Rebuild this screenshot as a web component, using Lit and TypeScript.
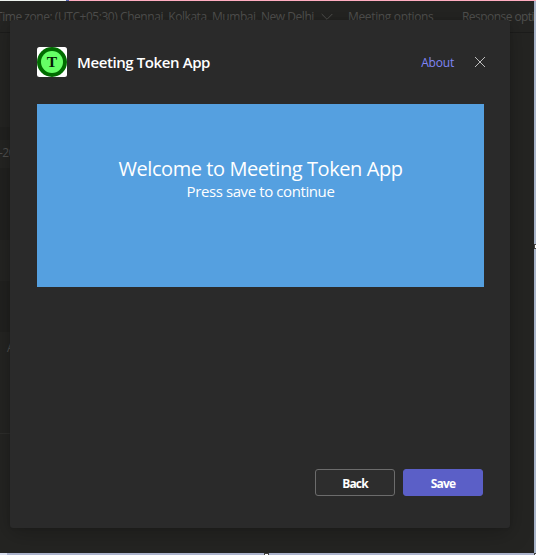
import { LitElement, html, css } from "lit";
import { customElement } from "lit/decorators.js";

@customElement("app-badge")
class AppBadge extends LitElement {
  static styles = css`
    :host { display: block; width: 30px; height: 30px; }
    svg { display: block; }
    text { font: bold 15.5px "Liberation Serif", serif; fill: #041a04; }
  `;
  render() {
    return html`<svg width="30" height="30" viewBox="0 0 30 30">
      <rect width="30" height="30" rx="2.5" fill="#fff" />
      <circle cx="15" cy="15" r="15" fill="#006c00" />
      <circle cx="15" cy="15" r="11" fill="#66ff66" />
      <text x="15" y="20" text-anchor="middle">T</text>
    </svg>`;
  }
}

@customElement("meeting-backdrop")
class MeetingBackdrop extends LitElement {
  static styles = css`
    :host { display: block; height: 100%; position: relative; color: #50504e; font-size: 12px; line-height: 16px; white-space: nowrap; }
    .top { display: flex; height: 1px; background: #ffadc0; }
    .white { width: 66px; background: #edf2ed; }
    .blue { width: 3px; background: #5868b5; }
    .bar { display: flex; align-items: center; box-sizing: border-box; height: 32px; border-bottom: 1px solid #1c1c1b; overflow: hidden; }
    .zone { width: 318px; margin-left: -4px; flex: none; letter-spacing: -0.45px; }
    .chev { flex: none; margin-left: 7px; }
    .options { flex: none; width: 114px; margin-left: 15px; letter-spacing: -0.35px; }
    .response { letter-spacing: -0.55px; }
    .rows { display: grid; width: 40px; grid-template-rows: 94px 13px 28px 72px 41px 51px 102px 1fr; height: 520px; }
    .dark { background: #21211f; }
    .year { padding-top: 5px; margin-left: -1px; letter-spacing: -0.5px; }
    .letter { padding: 8px 0 0 7px; border-bottom: 1px solid #2d2d2b; }
    .side { position: absolute; right: 0; top: 1px; bottom: 0; width: 2px; background: #a9b5ca; }
    .bottom { position: absolute; left: 0; right: 2px; bottom: 0; height: 2px; background: linear-gradient(90deg, #d9dff0 7px, #adb5ce 7px); }
    .grip { position: absolute; box-sizing: border-box; width: 5px; height: 5px; border: 1px solid #444; background: #fff; }
    .east { left: 534px; top: 244px; }
    .south { left: 264px; top: 553px; }
    .corner { left: 534px; top: 553px; }
  `;
  render() {
    return html`
      <div class="top"><div class="white"></div><div class="blue"></div></div>
      <div class="bar">
        <div class="zone">Time zone: (UTC+05:30) Chennai, Kolkata, Mumbai, New Delhi</div>
        <svg class="chev" width="12" height="8" viewBox="0 0 12 8"><path d="M.7 1 6 6.3 11.3 1" fill="none" stroke="#50504e" /></svg>
        <div class="options">Meeting options</div>
        <div class="response">Response options</div>
      </div>
      <div class="rows">
        <div></div><div class="dark"></div><div class="year">-20</div><div class="dark"></div>
        <div></div><div class="dark"></div><div class="letter">A</div><div></div>
      </div>
      <div class="side"></div><div class="bottom"></div>
      <div class="grip east"></div><div class="grip south"></div><div class="grip corner"></div>
    `;
  }
}

@customElement("app-root")
class AppRoot extends LitElement {
  static styles = css`
    :host { display: block; position: relative; width: 536px; height: 555px; overflow: hidden; background: #242422; font-family: "Open Sans", "Noto Sans", sans-serif; }
    .dialog { position: absolute; left: 10px; top: 20px; width: 500px; height: 508px; box-sizing: border-box; padding: 27px 27px 32px; display: flex; flex-direction: column; border-radius: 3px; background: #2a2a2a; box-shadow: 0 5px 22px rgba(0, 0, 0, 0.25), 0 0 3px rgba(0, 0, 0, 0.15); color: #fff; white-space: nowrap; }
    header { display: flex; align-items: center; height: 30px; }
    h1 { margin: 0 0 0 10px; font-size: 15px; font-weight: 600; line-height: 22px; letter-spacing: -0.4px; }
    .about { margin-left: auto; font-size: 12px; letter-spacing: -0.2px; color: #7f85f5; }
    .close { margin: 0 -3px 0 20px; }
    .welcome { margin-top: 27px; height: 183px; box-sizing: border-box; padding-top: 52px; display: flex; flex-direction: column; align-items: center; background: #55a0e0; margin-right: -1px; }
    .title { font-size: 20px; line-height: 26px; letter-spacing: -0.42px; }
    .hint { font-size: 15px; line-height: 20px; letter-spacing: -0.4px; margin-top: -1px; }
    footer { display: flex; justify-content: flex-end; gap: 8px; margin-top: auto; }
    button { width: 80px; height: 27px; padding: 2px 0 0; border-radius: 3px; border: 1px solid #6c6c6c; background: #2d2d2d; color: #fff; font: 700 12px/16px "Open Sans", "Noto Sans", sans-serif; letter-spacing: -0.85px; }
    .primary { border-color: #5b5fc7; background: #5b5fc7; }
  `;
  render() {
    return html`
      <meeting-backdrop></meeting-backdrop>
      <section class="dialog">
        <header>
          <app-badge></app-badge>
          <h1>Meeting Token App</h1>
          <span class="about">About</span>
          <svg class="close" width="12" height="12" viewBox="0 0 12 12"><path d="M1 1 11 11M11 1 1 11" fill="none" stroke="#bdbdbd" /></svg>
        </header>
        <div class="welcome">
          <div class="title">Welcome to Meeting Token App</div>
          <div class="hint">Press save to continue</div>
        </div>
        <footer><button>Back</button><button class="primary">Save</button></footer>
      </section>
    `;
  }
}
